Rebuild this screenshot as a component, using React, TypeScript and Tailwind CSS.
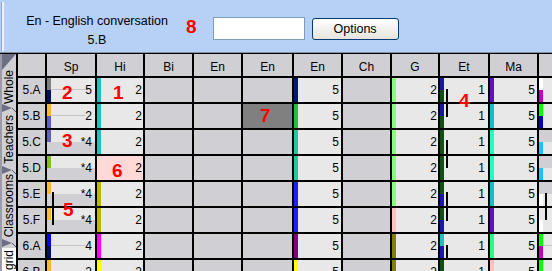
import React from "react";

type Mark = { t: string; pos: string };
type C = {
  full?: string;
  top?: string;
  bot?: string;
  n?: string;
  grayTop?: boolean;
  grayBot?: boolean;
  mid?: string;
  bg?: string;
  v?: string;
  mark?: Mark;
} | null;

const GRAY = "bg-[#d0d0d4]";
const LIGHT = "bg-[#e8e8e8]";

const HEADS = ["", "Sp", "Hi", "Bi", "En", "En", "En", "Ch", "G", "Et", "Ma", ""];

const teal = "bg-[#20c0c0]";
const lgreen = "bg-[#80ff80]";
const dgreen = "bg-[#105010]";
const etBlue = "bg-[#1818b0]";

const ROWS: { label: string; cells: C[] }[] = [
  {
    label: "5.A",
    cells: [
      { top: "bg-[#808080]", bot: "bg-[#001060]", n: "5", mid: "left-1 w-[34px]", mark: { t: "2", pos: "left-[15px] top-[5px]" } },
      { full: teal, n: "2", mark: { t: "1", pos: "left-[16px] top-[5px]" } },
      null,
      null,
      null,
      { full: "bg-[#001870]", n: "5" },
      null,
      { full: lgreen, n: "2" },
      { top: "bg-[#1818a0]", bot: dgreen, n: "1", v: "left-[6px] top-[11px] bottom-0", mark: { t: "4", pos: "left-[19px] top-[13px]" } },
      { full: "bg-[#6010c0]", n: "5" },
      { top: "bg-white", bot: "bg-[#c000c0]" },
    ],
  },
  {
    label: "5.B",
    cells: [
      { top: "bg-[#f8b830]", bot: "bg-[#6060c0]", n: "2", mid: "left-1 w-[34px]" },
      { full: teal, n: "2" },
      null,
      null,
      { bg: "bg-[#808080]", mark: { t: "7", pos: "left-[17px] top-[2px]" } },
      { full: "bg-[#20c040]", n: "5" },
      null,
      { full: lgreen, n: "2" },
      { top: "bg-[#1818a0]", bot: dgreen, n: "1", v: "left-[6px] top-0 h-[13px]" },
      { full: "bg-[#10c0c8]", n: "5" },
      { top: "bg-[#00ff00]", bot: "bg-[#0000c0]" },
    ],
  },
  {
    label: "5.C",
    cells: [
      { top: "bg-[#6060c0]", grayBot: true, n: "*4", mark: { t: "3", pos: "left-[15px] top-[1px]" } },
      { full: teal, n: "2" },
      null,
      null,
      null,
      { full: "bg-[#20c8a0]", n: "5" },
      null,
      { full: lgreen, n: "2" },
      { full: dgreen, n: "1", v: "left-[6px] top-[10px] bottom-0" },
      { full: "bg-[#20ffc0]", n: "5" },
      { grayTop: true, bot: "bg-[#20c0ff]" },
    ],
  },
  {
    label: "5.D",
    cells: [
      { top: "bg-[#80c020]", grayBot: true, n: "*4" },
      { bg: "bg-[#ffd8d8]", n: "2", mark: { t: "6", pos: "left-[15px] top-[5px]" } },
      null,
      null,
      null,
      { full: "bg-[#20c8a0]", n: "5" },
      null,
      { full: lgreen, n: "2" },
      { full: dgreen, n: "1", v: "left-[6px] top-0 h-[12px]" },
      { full: "bg-[#20ffc0]", n: "5" },
      { grayTop: true, bot: "bg-[#20c0ff]" },
    ],
  },
  {
    label: "5.E",
    cells: [
      { top: "bg-[#f8b830]", grayBot: true, n: "*4", v: "left-[5px] top-[10px] bottom-0", mark: { t: "5", pos: "left-[16px] top-[18px]" } },
      { full: "bg-[#b8b800]", n: "2" },
      null,
      null,
      null,
      { full: "bg-[#2020ff]", n: "5" },
      null,
      { full: lgreen, n: "2" },
      { top: dgreen, bot: etBlue, n: "1", v: "left-[6px] top-[10px] bottom-0" },
      { full: "bg-[#10c0c8]", n: "5" },
      { grayTop: true, bot: "bg-white", v: "left-[6px] top-[11px] bottom-0" },
    ],
  },
  {
    label: "5.F",
    cells: [
      { top: "bg-[#f8b830]", grayBot: true, n: "*4", v: "left-[5px] top-0 h-[17px]" },
      { full: "bg-[#b8b800]", n: "2" },
      null,
      null,
      null,
      { full: "bg-[#2020ff]", n: "5" },
      null,
      { full: "bg-[#ffc0c0]", n: "2" },
      { top: dgreen, bot: etBlue, n: "1", v: "left-[6px] top-0 h-[13px]" },
      { full: "bg-[#6010c0]", n: "5" },
      { bot: "bg-white", v: "left-[6px] top-0 h-[12px]" },
    ],
  },
  {
    label: "6.A",
    cells: [
      { top: "bg-[#0000ff]", bot: "bg-[#001060]", n: "4", mid: "left-1 w-[34px]" },
      { full: "bg-[#ff00ff]", n: "2" },
      null,
      null,
      null,
      { full: "bg-[#800080]", n: "5" },
      null,
      { full: "bg-[#808000]", n: "2" },
      { top: teal, bot: etBlue, n: "1", v: "left-[6px] top-[11px] h-[13px]" },
      { full: "bg-[#20ff80]", n: "5" },
      { top: "bg-[#00ff00]", bot: "bg-[#c000c0]", mid: "left-1 right-0" },
    ],
  },
  {
    label: "6.B",
    cells: [
      { top: "bg-[#f8b830]", n: "2" },
      { full: "bg-[#ffff00]", n: "2" },
      null,
      null,
      null,
      { full: "bg-[#ffff00]", n: "5" },
      null,
      { full: "bg-[#808000]", n: "2" },
      { full: dgreen, n: "1" },
      { full: "bg-[#ffc0c0]", n: "5" },
      { full: "bg-[#00ff00]" },
    ],
  },
];

function Half({ bar, gray }: { bar?: string; gray?: boolean }) {
  return (
    <div className={`flex ${gray ? GRAY : ""}`}>
      <div className={`w-1 ${bar ?? ""}`} />
    </div>
  );
}

function Cell({ c }: { c: C }) {
  if (!c) return <div className={GRAY} />;
  return (
    <div className={`relative grid grid-rows-2 ${c.bg ?? LIGHT}`}>
      {c.full ? (
        <div className={`row-span-2 w-1 ${c.full}`} />
      ) : (
        <>
          <Half bar={c.top} gray={c.grayTop} />
          <Half bar={c.bot} gray={c.grayBot} />
        </>
      )}
      {c.mid && <div className={`absolute top-[11px] h-px bg-[#c4c4cc] ${c.mid}`} />}
      {c.v && <div className={`absolute w-[2px] bg-black ${c.v}`} />}
      {c.n && (
        <div className="absolute inset-y-0 left-0 flex w-[45px] items-center justify-end">{c.n}</div>
      )}
      {c.mark && (
        <span className={`absolute z-10 text-[19px] font-bold leading-none text-[#ff0000] ${c.mark.pos}`}>
          {c.mark.t}
        </span>
      )}
    </div>
  );
}

function Notch({ h }: { h: string }) {
  return (
    <div className={`flex items-center ${h}`}>
      <svg width="14" height="8" viewBox="0 0 14 8">
        <polygon points="0,0 10,4 0,8" fill="#6e6e84" />
        <line x1="10" y1="4" x2="14" y2="8" stroke="#55556a" strokeWidth="1" />
      </svg>
    </div>
  );
}

function Tab({ label, h, active }: { label: string; h: string; active?: boolean }) {
  return (
    <div className={`flex justify-center ${h} ${active ? "items-start bg-white pt-[2px]" : "items-center"}`}>
      <span className="rotate-180 text-[12px] leading-[14px] [writing-mode:vertical-rl]">{label}</span>
    </div>
  );
}

function SideTabs() {
  return (
    <div className={`row-span-9 flex flex-col border-l-2 border-[#9c9ca8] ${GRAY}`}>
      <svg width="14" height="16" viewBox="0 0 14 16" className="shrink-0">
        <polygon points="0,0 14,0 0,16" fill="#6e6e84" />
      </svg>
      <Tab label="Whole" h="h-[34px]" />
      <Notch h="h-[8px]" />
      <Tab label="Teachers" h="h-[54px]" />
      <Notch h="h-[8px]" />
      <Tab label="Classrooms" h="h-[64px]" />
      <Notch h="h-[10px]" />
      <Tab label="grid" h="flex-1" active />
    </div>
  );
}

export default function App() {
  return (
    <div className="h-[271px] w-[552px] overflow-hidden bg-white font-['Liberation_Sans',Arial,sans-serif] text-[12px] text-black">
      <div className="flex h-[53px] items-start border-b border-[#8890a0] bg-[#b7d0f5]">
        <div className="ml-[1px] mt-[2px] h-[49px] w-[3px] border-l border-[#8ea4c4] bg-[#eef3fb]" />
        <div className="ml-[8px] mt-[12px] flex w-[170px] flex-col items-center text-[12.5px] leading-[19px]">
          <span>En - English conversation</span>
          <span>5.B</span>
        </div>
        <span className="ml-[4px] mt-[17px] text-[19px] font-bold leading-[20px] text-[#ff0000]">8</span>
        <input
          className="ml-[16px] mt-[17px] h-[23px] w-[92px] border border-[#7f9db9] bg-white px-1 outline-none"
          defaultValue=""
        />
        <button className="ml-[7px] mt-[18px] h-[22px] w-[87px] rounded-[3px] border border-[#003c74] bg-linear-to-b from-white to-[#e6e4dc] text-[12.5px] leading-none">
          Options
        </button>
      </div>
      <div className="grid grid-cols-[16px_27px_48px_46px_47px_47px_49px_47px_47px_46px_48px_47px_13px] grid-rows-[22px_repeat(8,24px)] gap-[2px] bg-black pt-px">
        <SideTabs />
        {HEADS.map((h, i) => (
          <div key={i} className={`flex justify-center pt-[6px] leading-[14px] ${GRAY}`}>
            {h}
          </div>
        ))}
        {ROWS.map((r) => (
          <React.Fragment key={r.label}>
            <div className={`flex items-center justify-center ${GRAY}`}>{r.label}</div>
            {r.cells.map((c, i) => (
              <Cell key={i} c={c} />
            ))}
          </React.Fragment>
        ))}
      </div>
    </div>
  );
}
